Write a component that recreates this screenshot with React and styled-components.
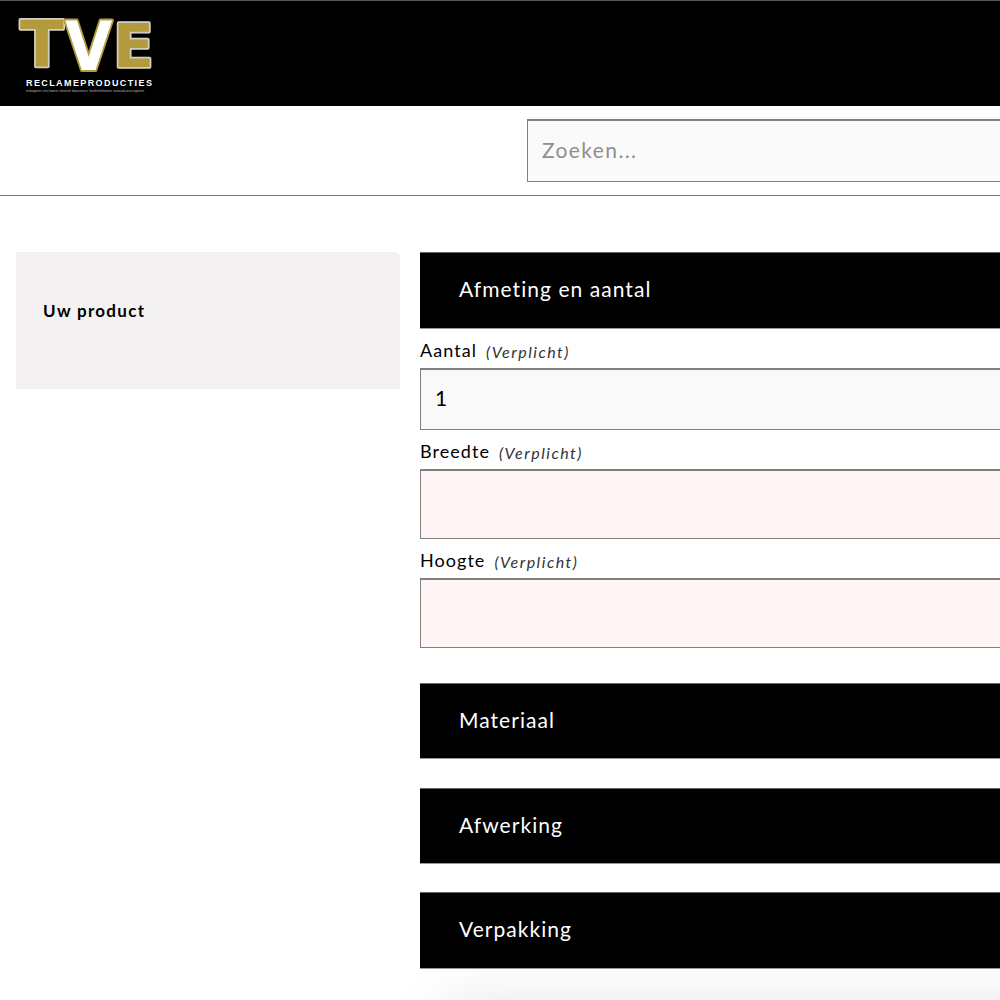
import React from "react";
import styled, { createGlobalStyle } from "styled-components";

const Global = createGlobalStyle`
  html, body { margin: 0; padding: 0; background: #fff; }
  body { width: 1000px; height: 1000px; overflow: hidden; font-family: "Lato", "Open Sans", sans-serif; color: #000; }
  * { box-sizing: border-box; }
`;
const Page = styled.div`width: 1000px; height: 1000px; overflow: hidden;`;
const Header = styled.header`
  height: 106px; background: #000; border-top: 1px solid #555;
  padding: 7px 0 0 18px;
`;
const SearchBar = styled.div`
  height: 90px; width: 1200px; border-bottom: 1px solid #777;
  padding: 13px 0 0 527px;
`;
const Field = styled.div`
  width: ${p => p.$width || "700px"}; height: ${p => p.$h}px;
  background: ${p => p.$bg}; border: 1px solid #808080; border-top-width: 2px;
  display: flex; align-items: center; padding: 0 0 4px ${p => p.$pad || 14}px;
  font-size: ${p => p.$size || 21}px; letter-spacing: ${p => p.$ls || "0"};
  color: ${p => p.$color || "#000"};
`;
const Layout = styled.div`
  display: flex; align-items: flex-start; gap: 20px;
  padding: 56px 0 0 16px; width: 1200px;
`;
const Side = styled.aside`
  flex: 0 0 384px; height: 137px; background: #f3f1f2;
  border-top-right-radius: 6px; padding: 48px 27px;
`;
const SideTitle = styled.div`font-size: 17px; font-weight: 700; letter-spacing: 1.3px; line-height: 22px;`;
const Main = styled.main`flex: 1; display: flex; flex-direction: column;`;
const Section = styled.div`
  height: ${p => p.$h || 76}px; background: #000; color: #fff; display: flex; align-items: center;
  padding: 0 0 4px 39px; font-size: 21px; letter-spacing: 1.05px;
  margin-top: ${p => p.$mt || 0}px; border-top: 1px solid #666; border-bottom: 1px solid #999;
`;
const Label = styled.div`
  display: flex; align-items: baseline; gap: 9px;
  font-size: 18px; letter-spacing: 1.05px; height: ${p => p.$h}px; padding-top: ${p => p.$pt}px; line-height: 22px;
`;
const Hint = styled.i`font-size: 16px; letter-spacing: 1.5px; color: #333; position: relative; top: 1px;`;
const Shadow = styled.div`
  height: 60px; margin: 33px 0 0 24px; background: #fff; box-shadow: 0 0 60px rgba(0,0,0,.1);
`;
const LogoMark = styled.svg`display: block; overflow: visible;`;
const Logo = () => (
  <LogoMark width="142" height="92" viewBox="0 0 142 92">
    <g fontFamily="DejaVu Sans, sans-serif" fontWeight="700" strokeLinejoin="round" paintOrder="stroke">
      <text x="2" y="59" fontSize="64" fill="#b39a3c" stroke="#d2cfc0" strokeWidth="3.5">T</text>
      <text transform="translate(47 62) scale(0.9 1)" fontSize="68" fill="#fff" stroke="#b39a3c" strokeWidth="4">V</text>
      <text x="95" y="59" fontSize="60" fill="#b39a3c" stroke="#d2cfc0" strokeWidth="3.5">E</text>
      <text x="8" y="78" fontSize="9" fontFamily="Liberation Sans, sans-serif" fill="#fff" letterSpacing="1.4">RECLAMEPRODUCTIES</text>
      <text x="8" y="84" fontSize="4.4" fontFamily="Liberation Sans, sans-serif" fontWeight="400" fill="#aaa">inkopen reclame textiel banners leefreklame totaalconcepten</text>
    </g>
  </LogoMark>
);

export default function App() {
  return (
    <Page>
      <Global />
      <Header><Logo /></Header>
      <SearchBar>
        <Field $h={63} $bg="#fafafa" $color="#8f8f8f" $ls="1.4px">Zoeken...</Field>
      </SearchBar>
      <Layout>
        <Side><SideTitle>Uw product</SideTitle></Side>
        <Main>
          <Section $h={77}>Afmeting en aantal</Section>
          <Label $h={39} $pt={10}>Aantal <Hint>(Verplicht)</Hint></Label>
          <Field $h={62} $bg="#f9f9f9" $width="100%">1</Field>
          <Label $h={39} $pt={10}>Breedte <Hint>(Verplicht)</Hint></Label>
          <Field $h={70} $bg="#fff5f4" $width="100%" />
          <Label $h={39} $pt={10}>Hoogte <Hint>(Verplicht)</Hint></Label>
          <Field $h={70} $bg="#fff5f4" $width="100%" />
          <Section $mt={35}>Materiaal</Section>
          <Section $mt={29}>Afwerking</Section>
          <Section $mt={28} $h={77}>Verpakking</Section>
          <Shadow />
        </Main>
      </Layout>
    </Page>
  );
}
